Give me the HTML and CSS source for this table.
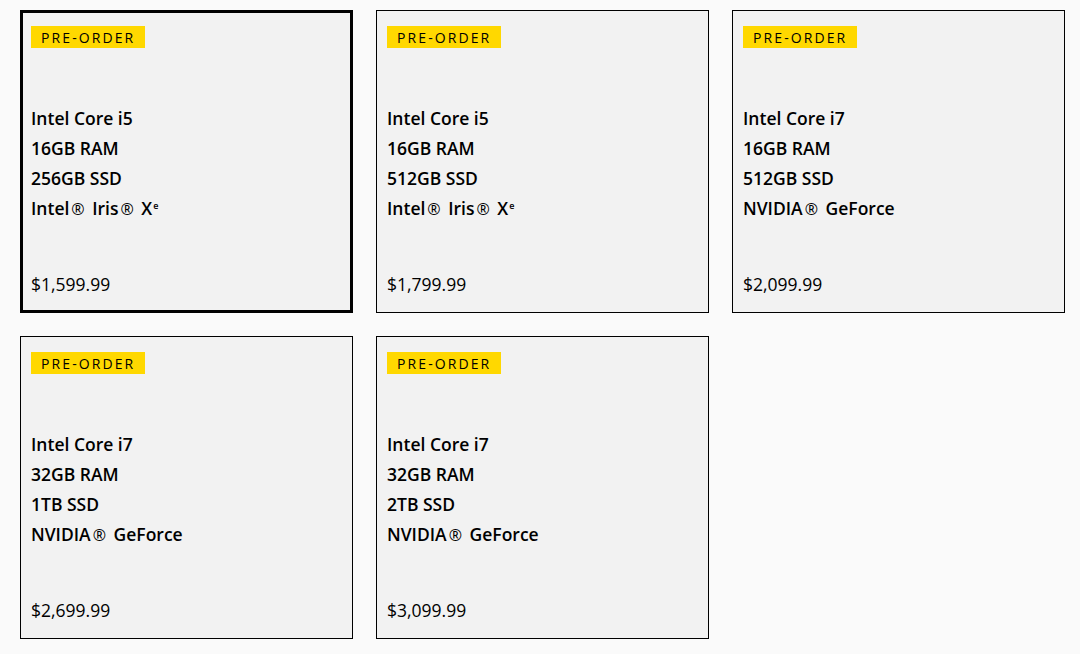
FILE: index.html
```html
<!DOCTYPE html>
<html lang="en">
<head>
<meta charset="utf-8">
<title>Configurations</title>
<link rel="stylesheet" href="styles.css">
</head>
<body>
<div class="grid">
  <div class="card selected">
    <span class="badge">PRE-ORDER</span>
    <div class="specs">
      <div>Intel Core i5</div>
      <div>16GB RAM</div>
      <div>256GB SSD</div>
      <div>Intel<span class="reg">®</span> Iris<span class="reg">®</span> X<sup>e</sup></div>
    </div>
    <div class="price">$1,599.99</div>
  </div>
  <div class="card">
    <span class="badge">PRE-ORDER</span>
    <div class="specs">
      <div>Intel Core i5</div>
      <div>16GB RAM</div>
      <div>512GB SSD</div>
      <div>Intel<span class="reg">®</span> Iris<span class="reg">®</span> X<sup>e</sup></div>
    </div>
    <div class="price">$1,799.99</div>
  </div>
  <div class="card">
    <span class="badge">PRE-ORDER</span>
    <div class="specs">
      <div>Intel Core i7</div>
      <div>16GB RAM</div>
      <div>512GB SSD</div>
      <div>NVIDIA<span class="reg">®</span> GeForce</div>
    </div>
    <div class="price">$2,099.99</div>
  </div>
  <div class="card">
    <span class="badge">PRE-ORDER</span>
    <div class="specs">
      <div>Intel Core i7</div>
      <div>32GB RAM</div>
      <div>1TB SSD</div>
      <div>NVIDIA<span class="reg">®</span> GeForce</div>
    </div>
    <div class="price">$2,699.99</div>
  </div>
  <div class="card">
    <span class="badge">PRE-ORDER</span>
    <div class="specs">
      <div>Intel Core i7</div>
      <div>32GB RAM</div>
      <div>2TB SSD</div>
      <div>NVIDIA<span class="reg">®</span> GeForce</div>
    </div>
    <div class="price">$3,099.99</div>
  </div>
</div>
</body>
</html>
```
FILE: styles.css
```css
html, body {
  margin: 0;
  padding: 0;
  background: #fafafa;
}
body {
  font-family: "Open Sans", "Noto Sans", sans-serif;
  color: #000;
}
.grid {
  display: grid;
  grid-template-columns: repeat(3, 333px);
  column-gap: 23px;
  row-gap: 23px;
  padding: 10px 0 0 20px;
}
.card {
  box-sizing: border-box;
  height: 303px;
  background: #f2f2f2;
  border: 1px solid #000;
  padding: 15px 10px 13px;
  display: flex;
  flex-direction: column;
  align-items: flex-start;
}
.card.selected {
  border-width: 3px;
  padding: 13px 8px 11px;
}
.badge {
  display: inline-block;
  box-sizing: border-box;
  background: #ffd800;
  height: 22px;
  line-height: 22px;
  padding: 1px 10px 0 10px;
  font-size: 14px;
  letter-spacing: 2.1px;
}
.specs {
  margin-top: 55px;
  font-size: 17.5px;
  font-weight: 600;
  line-height: 30px;
}
.reg {
  font-weight: 400;
  font-size: 16px;
  margin: 0 3px 0 2px;
}
sup {
  font-size: 9px;
  vertical-align: 6px;
  line-height: 0;
  margin-left: 1px;
}
.price {
  margin-top: auto;
  font-size: 17.5px;
  line-height: 30px;
}
```
